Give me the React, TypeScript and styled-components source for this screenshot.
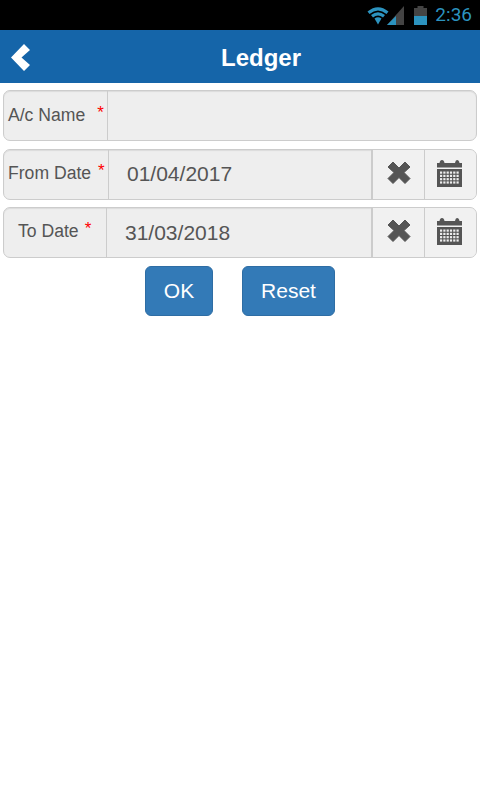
import React from "react";
import styled, { createGlobalStyle } from "styled-components";

const Global = createGlobalStyle`
  html, body { margin: 0; padding: 0; background: #fff; }
  body { font-family: "Liberation Sans", Arial, sans-serif; }
`;
const Page = styled.div`width: 480px; height: 800px; overflow: hidden; display: flex; flex-direction: column; background: #fff;`;
const StatusBar = styled.div`height: 30px; background: #000; display: flex; align-items: center; justify-content: flex-end; padding-right: 8px; box-sizing: border-box;`;
const Clock = styled.span`font-family: Roboto, sans-serif; font-size: 19px; color: #2c93bf; margin-left: 8px; line-height: 30px;`;
const Header = styled.header`height: 53px; background: #1565a9; display: flex; align-items: center; justify-content: center; position: relative; padding: 2px 0 0 42px; box-sizing: border-box;`;
const Title = styled.h1`margin: 0; font-size: 24px; font-weight: bold; color: #fff;`;
const Back = styled.svg`position: absolute; left: 11px; top: 14px;`;
const Form = styled.main`display: flex; flex-direction: column; padding: 7px 3px 0; gap: 8px;`;
const Row = styled.div<{ $pull?: boolean }>`
  display: flex; height: 51px; box-sizing: border-box;
  border: 1px solid #ccc; border-radius: 7px; background: #eee; overflow: hidden;
  box-shadow: inset 0 1px 1px rgba(0,0,0,.08); color: #555;
  ${p => p.$pull ? "margin-top: -1px;" : ""}
`;
const Label = styled.label<{ $w: number; $center?: boolean; $raise?: number }>`
  width: ${p => p.$w}px; box-sizing: border-box; border-right: 1px solid #ccc;
  display: flex; align-items: center; font-size: 17.6px; color: #555; white-space: pre;
  padding-left: ${p => p.$center ? 14 : 4}px;
  padding-bottom: ${p => p.$raise ?? 3}px;
`;
const Star = styled.span<{ $gap: number }>`color: #f00; font-size: 17px; margin-left: ${p => p.$gap}px; margin-top: -5px;`;
const Value = styled.div<{ $pad: number; $raise?: number }>`
  flex: 1; display: flex; align-items: center; font-size: 21px; color: #555;
  padding-left: ${p => p.$pad}px; padding-bottom: ${p => p.$raise ?? 0}px; border-right: 2px solid #ccc;
`;
const Empty = styled.div`flex: 1;`;
const IconCell = styled.div<{ $w: number; $line?: boolean }>`
  width: ${p => p.$w}px; display: flex; align-items: center; justify-content: center;
  background: #f1f1f1; box-sizing: border-box; padding-bottom: 2px;
  ${p => p.$line ? "border-right: 1px solid #ccc;" : "padding-right: 2px;"}
`;
const Actions = styled.div`display: flex; justify-content: center; gap: 29px; margin-top: 0; padding-right: 1px;`;
const Btn = styled.button<{ $w: number }>`
  width: ${p => p.$w}px; height: 50px; background: #337ab7; border: 1px solid #2e6da4; border-radius: 6px;
  color: #fff; font-family: inherit; font-size: 21px; padding: 0 0 1px 1px;
`;

const Wifi = () => (
  <svg width="22" height="19" viewBox="0 0 22 19" style={{ marginRight: -2 }}>
    <path d="M0.5 5.5 Q11 -3 21.5 5.5 L19.5 8 Q11 1 2.5 8 Z" fill="#2c93bf" />
    <path d="M4 9 Q11 3.5 18 9 L16 11.5 Q11 7.5 6 11.5 Z" fill="#2c93bf" />
    <path d="M7.5 12.5 Q11 10 14.5 12.5 L11 18.5 Z" fill="#2c93bf" />
  </svg>
);
const Signal = () => (
  <svg width="17" height="19" viewBox="0 0 17 19">
    <path d="M17 0 V19 H0 Z" fill="#444" />
    <path d="M9 10 V19 H0 Z" fill="#2c93bf" />
  </svg>
);
const Battery = () => (
  <svg width="13" height="19" viewBox="0 0 13 19" style={{ marginLeft: 10 }}>
    <path d="M3.5 0 H9.5 V2 H13 V19 H0 V2 H3.5 Z" fill="#444" />
    <rect x="0" y="10" width="13" height="9" fill="#2c93bf" />
  </svg>
);
const Cross = () => (
  <svg width="24" height="24" viewBox="0 1.5 24 24">
    <path d="M6 1.5 L12 7.5 L18 1.5 L23 6.5 L17 12 L23 18 L18 23 L12 17 L6 23 L1 18 L7 12 L1 6.5 Z" fill="#555" stroke="#555" strokeLinejoin="round" />
  </svg>
);
const Calendar = () => {
  const cells = [];
  for (let r = 0; r < 4; r++) for (let c = 0; c < 6; c++)
    cells.push(<rect key={`${r}-${c}`} x={3 + c * 3.3} y={11.5 + r * 3.3} width="2.2" height="2.2" fill="#eee" />);
  return (
    <svg width="25" height="27" viewBox="0 0 25 27">
      <path d="M0 3 H2.5 Q3 0 5 0 Q7 0 7.5 3 H18 Q18.5 0 20 0 Q22 0 22.5 3 H25 V7.5 H0 Z" fill="#555" />
      <rect x="0" y="9" width="25" height="18" fill="#555" />
      {cells}
    </svg>
  );
};

export default function App() {
  return (
    <Page>
      <Global />
      <StatusBar><Wifi /><Signal /><Battery /><Clock>2:36</Clock></StatusBar>
      <Header>
        <Back width="19" height="27" viewBox="0 0 19 27">
          <path d="M13 0 L19 6 L10.5 13.5 L19 21 L13 27 L0 13.5 Z" fill="#fff" />
        </Back>
        <Title>Ledger</Title>
      </Header>
      <Form>
        <Row>
          <Label $w={104} $raise={1}>A/c Name<Star $gap={12}>*</Star></Label>
          <Empty />
        </Row>
        <Row>
          <Label $w={105}>From Date<Star $gap={7}>*</Star></Label>
          <Value $pad={18} $raise={2}>01/04/2017</Value>
          <IconCell $w={52} $line><Cross /></IconCell>
          <IconCell $w={51}><Calendar /></IconCell>
        </Row>
        <Row $pull>
          <Label $w={103} $center>To Date<Star $gap={6}>*</Star></Label>
          <Value $pad={18}>31/03/2018</Value>
          <IconCell $w={52} $line><Cross /></IconCell>
          <IconCell $w={51}><Calendar /></IconCell>
        </Row>
        <Actions>
          <Btn $w={68}>OK</Btn>
          <Btn $w={93}>Reset</Btn>
        </Actions>
      </Form>
    </Page>
  );
}
